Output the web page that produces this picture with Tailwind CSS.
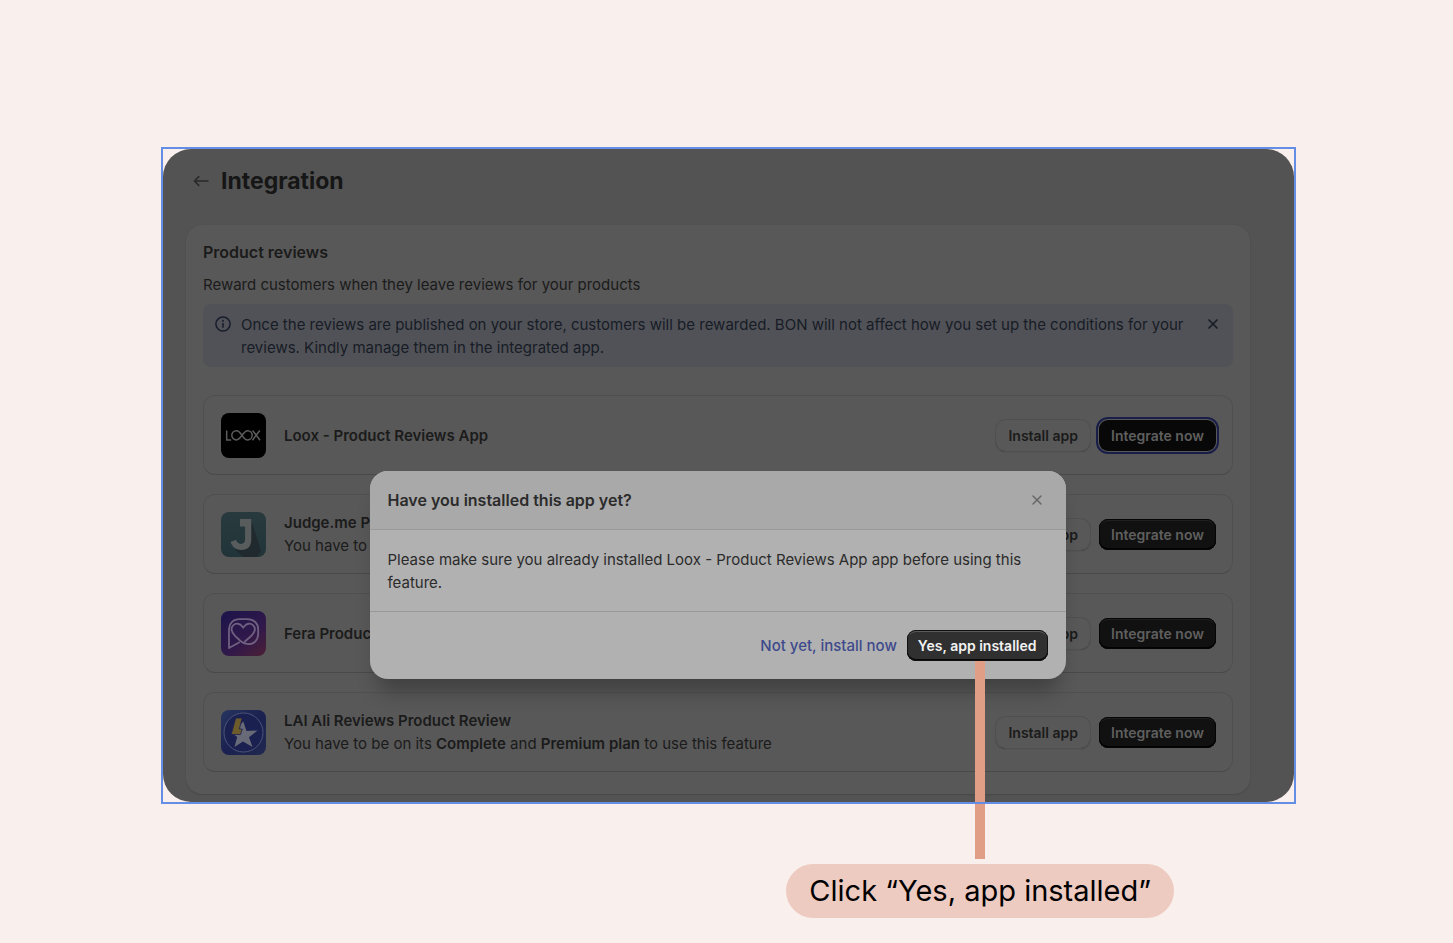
<!DOCTYPE html>
<html lang="en">
<head>
    <meta charset="UTF-8">
    <meta name="viewport" content="width=device-width, initial-scale=1.0">
    <title>Integration</title>
    <script src="https://cdn.jsdelivr.net/npm/@tailwindcss/browser@4"></script>
</head>

<body class="bg-[#f9efec] min-h-screen pt-[147px] pl-[161px] pr-[157px] font-['Inter',sans-serif] text-[15px] leading-[23px] text-[#1b1b1b]">
    <main class="relative p-[2px]">
        <div class="rounded-[28px] bg-[#535353] pt-4 pl-[23px] pr-[44px] pb-2">
            <header class="flex items-center gap-3 h-8 pl-[7px]">
                <button type="button" aria-label="Back">
                    <svg class="w-4 h-4" viewBox="0 0 16 16" fill="none" stroke="#2a2a2a" stroke-width="1.6" stroke-linecap="round" stroke-linejoin="round"><path d="M15 8H1.5M5.8 3.6 1.4 8l4.4 4.4" /></svg>
                </button>
                <h1 class="text-[23px] leading-8 font-bold text-[#161616]">Integration</h1>
            </header>

            <section class="mt-7 rounded-2xl bg-[#585858] shadow-[0_1px_1px_#494949,0_0_1px_#4c4c4c] px-[17px] pt-4 pb-[22px]">
                <h2 class="text-[16px] font-semibold">Product reviews</h2>
                <p class="mt-[9px]">Reward customers when they leave reviews for your products</p>

                <div class="mt-2 flex items-start gap-[10px] rounded-lg bg-[#515257] text-[#171c26] pl-3 pr-[14px] pt-[9px] pb-2">
                    <svg class="w-4 h-4 mt-[3px] shrink-0" viewBox="0 0 16 16" fill="none" stroke="#171c2c" stroke-width="1.5" stroke-linecap="round"><circle cx="8" cy="8" r="7.1" /><path d="M8 7.6v3.6" /><path d="M8 4.8v.1" stroke-width="1.9" /></svg>
                    <p class="flex-1">Once the reviews are published on your store, customers will be rewarded. BON will not affect how you set up the conditions for your reviews. Kindly manage them in the integrated app.</p>
                    <button type="button" aria-label="Dismiss" class="mt-[5px]">
                        <svg class="w-3 h-3" viewBox="0 0 12 12" fill="none" stroke="#171c26" stroke-width="1.7" stroke-linecap="round"><path d="m2 2 8 8M10 2l-8 8" /></svg>
                    </button>
                </div>

                <ul class="mt-7 flex flex-col gap-[19px]">
                    <li class="flex items-center h-20 rounded-xl border border-[#505050] border-b-[#494949] pl-[17px] pr-4">
                        <svg class="w-[45px] h-[45px] shrink-0" viewBox="0 0 45 45">
                            <rect width="45" height="45" rx="8" fill="#000" />
                            <g fill="none" stroke="#5c5c5c" stroke-width="1.5">
                                <path d="M5.7 17.5v9.4h4.4" />
                                <path d="M21 22.3c-2-3.1-3.4-4.6-5.6-4.6a4.6 4.6 0 0 0 0 9.2c4.6 0 6.6-9.2 11.2-9.2a4.6 4.6 0 0 1 0 9.2c-2.2 0-3.6-1.5-5.6-4.6" />
                                <path d="m31.6 17.5 7.4 9.7M38.8 17.5l-7.4 9.7" />
                            </g>
                        </svg>
                        <div class="flex-1 ml-[18px]">
                            <h3 class="font-semibold">Loox - Product Reviews App</h3>
                        </div>
                        <div class="flex items-center gap-[9px]">
                            <button type="button" class="h-[31px] px-3 rounded-[9px] text-[14px] font-semibold shadow-[0_0_0_1px_#505050,0_1px_1px_#3a3a3a]">Install app</button>
                            <button type="button" class="h-[31px] px-3 rounded-[9px] text-[14px] font-semibold bg-[#080808] text-[#5f5f5f] shadow-[0_0_0_1px_#585858,0_0_0_3px_#181e48]">Integrate now</button>
                        </div>
                    </li>
                    <li class="flex items-center h-20 rounded-xl border border-[#505050] border-b-[#494949] pl-[17px] pr-4">
                        <svg class="w-[45px] h-[45px] shrink-0" viewBox="0 0 45 45">
                            <defs><linearGradient id="judge" x1="0" y1="0" x2="0" y2="1"><stop stop-color="#283a3d" /><stop offset="1" stop-color="#213439" /></linearGradient></defs>
                            <rect width="45" height="45" rx="8" fill="url(#judge)" />
                            <path d="m30.5 9 9.5 30-4 6H22l-8-7.5 15-7Z" fill="#202a2e" />
                            <path d="M19 7h11.3v20.5c0 7-3.8 10.5-9.9 10.5-5.200 0-9.200-3-10.900-8l5.500-2.200c1 2.600 2.500 4.100 4.900 4.100 2.700 0 4.200-1.500 4.200-4.900V14.500H19Z" fill="#595c5d" />
                        </svg>
                        <div class="flex-1 ml-[18px]">
                            <h3 class="font-semibold">Judge.me Product Reviews App</h3>
                            <p>You have to be on its <b class="font-semibold">Awesome plan</b> to use this feature</p>
                        </div>
                        <div class="flex items-center gap-[9px]">
                            <button type="button" class="h-[31px] px-3 rounded-[9px] text-[14px] font-semibold shadow-[0_0_0_1px_#505050,0_1px_1px_#3a3a3a]">Install app</button>
                            <button type="button" class="h-[31px] px-3 rounded-[9px] text-[14px] font-semibold bg-[#111111] text-[#5f5f5f] shadow-[inset_0_0_0_1px_#050505,inset_0_-2px_0_#030303,inset_0_2px_0_#202020]">Integrate now</button>
                        </div>
                    </li>
                    <li class="flex items-center h-20 rounded-xl border border-[#505050] border-b-[#494949] pl-[17px] pr-4">
                        <svg class="w-[45px] h-[45px] shrink-0" viewBox="0 0 45 45">
                            <defs><linearGradient id="fera" x1="0.2" y1="0" x2="1" y2="1"><stop stop-color="#1f154b" /><stop offset="0.55" stop-color="#30184a" /><stop offset="1" stop-color="#4c2036" /></linearGradient></defs>
                            <rect width="45" height="45" rx="8" fill="url(#fera)" />
                            <path d="M18 31.5 8 37V19.5C8 12 12 8.2 19 8.2h7.500c6.500 0 10.700 4 10.700 10.300v4c0 6.500-4.200 10.700-10.200 10.700-3 0-5.200-1.200-7.500-3.200l-5.500-5.200c-4.200-4-4.300-8-1.800-10.500 2.700-2.600 6.700-2 9.300 1.500l.7 1 .7-1c2.600-3.500 6.600-4.100 9.300-1.500 2.500 2.500 2.400 6.500-1.800 10.500l-6.500 5.700" fill="none" stroke="#706080" stroke-width="1.8" stroke-linejoin="round" stroke-linecap="round" />
                        </svg>
                        <div class="flex-1 ml-[18px]">
                            <h3 class="font-semibold">Fera Product Reviews App</h3>
                        </div>
                        <div class="flex items-center gap-[9px]">
                            <button type="button" class="h-[31px] px-3 rounded-[9px] text-[14px] font-semibold shadow-[0_0_0_1px_#505050,0_1px_1px_#3a3a3a]">Install app</button>
                            <button type="button" class="h-[31px] px-3 rounded-[9px] text-[14px] font-semibold bg-[#111111] text-[#5f5f5f] shadow-[inset_0_0_0_1px_#050505,inset_0_-2px_0_#030303,inset_0_2px_0_#202020]">Integrate now</button>
                        </div>
                    </li>
                    <li class="flex items-center h-20 rounded-xl border border-[#505050] border-b-[#494949] pl-[17px] pr-4">
                        <svg class="w-[45px] h-[45px] shrink-0" viewBox="0 0 45 45">
                            <defs><linearGradient id="lai" x1="0" y1="0" x2="1" y2="1"><stop stop-color="#26355e" /><stop offset="0.5" stop-color="#1b2150" /><stop offset="1" stop-color="#20294f" /></linearGradient></defs>
                            <rect width="45" height="45" rx="8" fill="url(#lai)" />
                            <circle cx="22.5" cy="22.5" r="19.5" fill="#1a2150" stroke="#52587a" stroke-width="0.9" />
                            <path d="m22.3 11.5 3.2 9.500 11-.5-8.500 6.700 3.500 9.800-9.500-5.500-8.500 5.500 2.700-10-5.200-4Z" fill="#686a78" />
                            <path d="M14.7 8h6.500l-2.900 11h3l-1.800 5.500h-9.300Z" fill="#6d5b2c" stroke="#1a2150" stroke-width="0.8" />
                        </svg>
                        <div class="flex-1 ml-[18px]">
                            <h3 class="font-semibold">LAI Ali Reviews Product Review</h3>
                            <p>You have to be on its <b class="font-semibold">Complete</b> and <b class="font-semibold">Premium plan</b> to use this feature</p>
                        </div>
                        <div class="flex items-center gap-[9px]">
                            <button type="button" class="h-[31px] px-3 rounded-[9px] text-[14px] font-semibold shadow-[0_0_0_1px_#505050,0_1px_1px_#3a3a3a]">Install app</button>
                            <button type="button" class="h-[31px] px-3 rounded-[9px] text-[14px] font-semibold bg-[#111111] text-[#5f5f5f] shadow-[inset_0_0_0_1px_#050505,inset_0_-2px_0_#030303,inset_0_2px_0_#202020]">Integrate now</button>
                        </div>
                    </li>
                </ul>
            </section>
        </div>

        <!-- Modal -->
        <div class="absolute inset-0 pt-[324px] pl-[2px] pr-6 flex justify-center items-start">
            <div role="dialog" aria-labelledby="modal-title" class="w-full max-w-[696px] rounded-[18px] bg-[#b1b1b1] text-[#2b2b2b] shadow-[0_20px_20px_-8px_rgba(0,0,0,0.28)]">
                <div class="flex items-center justify-between h-[59px] px-[18px] rounded-t-[18px] bg-[#a9a9a9] border-b border-[#999999]">
                    <h2 id="modal-title" class="text-[16px] font-semibold">Have you installed this app yet?</h2>
                    <button type="button" aria-label="Close" class="px-[5px]">
                        <svg class="w-3 h-3" viewBox="0 0 12 12" fill="none" stroke="#666666" stroke-width="1.5" stroke-linecap="round"><path d="m2 2 8 8M10 2l-8 8" /></svg>
                    </button>
                </div>
                <p class="px-[18px] pt-[18px] pb-[17px]">Please make sure you already installed Loox - Product Reviews App app before using this feature.</p>
                <div class="flex items-center justify-end gap-[10px] h-[68px] px-[18px] border-t border-[#999999]">
                    <a href="#" class="font-medium text-[#3e4a8c]">Not yet, install now</a>
                    <div class="relative">
                        <button type="button" class="block h-[31px] px-[11px] rounded-[9px] text-[14px] font-semibold bg-[#303030] text-[#f2f2f2] shadow-[inset_0_0_0_1px_#101010,inset_0_-2px_0_#080808,inset_0_2px_0_#5a5a5a]">Yes, app installed</button>
                        <span class="absolute top-full left-1/2 -ml-[2px] w-[10px] h-[198px] bg-[#df9e85]"></span>
                    </div>
                </div>
            </div>
        </div>

        <!-- Selection outline -->
        <div class="absolute inset-0 border-2 border-[#648de5] pointer-events-none"></div>
    </main>

    <div class="flex justify-end mt-[60px] pr-[122px]">
        <p class="rounded-full bg-[#edcbc0] px-[23px] text-[29px] leading-[54px] text-black">Click “Yes, app installed”</p>
    </div>
</body>
</html>
